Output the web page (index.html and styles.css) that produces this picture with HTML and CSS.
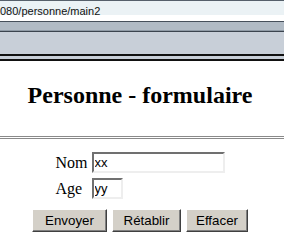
FILE: index.html
```html
<!DOCTYPE html>
<html lang="fr">
<head>
    <meta charset="UTF-8">
    <title>Personne - formulaire</title>
    <link rel="stylesheet" href="styles.css">
</head>
<body>
    <!-- browser chrome -->
    <div class="urlbar">080/personne/main2</div>
    <div class="gap"></div>
    <div class="toolbar"></div>
    <div class="linkbar"></div>
    <div class="tabline"></div>

    <div class="page">
        <h2 class="title">Personne - formulaire</h2>
        <hr class="rule">
        <form class="form">
            <div class="fields">
                <label class="label" for="nom">Nom</label>
                <input class="field field-nom" id="nom" type="text" value="xx">
                <label class="label" for="age">Age</label>
                <input class="field field-age" id="age" type="text" value="yy">
            </div>
            <div class="buttons">
                <button class="btn btn-send" type="button">Envoyer</button>
                <button class="btn btn-reset" type="button">Rétablir</button>
                <button class="btn btn-clear" type="button">Effacer</button>
            </div>
        </form>
    </div>
</body>
</html>
```

FILE: styles.css
```css
body {
    margin: 0;
    background-color: #fff;
    font-family: "Liberation Serif", "Times New Roman", serif;
    color: #000;
}
.urlbar {
    height: 11px;
    padding-top: 3px;
    border-top: 1px solid #56606b;
    background-color: #ebf2f5;
    font-family: "Liberation Sans", Arial, sans-serif;
    font-size: 11px;
    line-height: 14px;
    color: #111;
    white-space: nowrap;
}
.gap {
    height: 6px;
}
.toolbar {
    height: 8px;
    border-top: 1px solid #46505b;
    border-bottom: 1px solid #8f9aa5;
    background-color: #b1bbc5;
}
.linkbar {
    height: 22px;
    border-top: 1px solid #3b444e;
    border-bottom: 2px solid #111;
    background-color: #c8cfd8;
}
.tabline {
    height: 3px;
    border-bottom: 2px solid #111;
    background-color: #c8cfd8;
}
.page {
    padding: 0;
}
.title {
    margin: 20px 0 27px;
    padding-right: 4px;
    font-size: 24px;
    font-weight: bold;
    line-height: 28px;
    text-align: center;
}
.rule {
    margin: 0;
    height: 1px;
    border: 0;
    border-top: 1px solid #8a8a8a;
    border-bottom: 1px solid #8a8a8a;
}
.form {
    margin-top: 13px;
    padding-right: 4px;
}
.fields {
    display: grid;
    grid-template-columns: auto auto;
    justify-content: center;
    justify-items: start;
    align-items: center;
    column-gap: 4px;
    row-gap: 5px;
}
.label {
    font-size: 16px;
}
.field {
    box-sizing: border-box;
    height: 21px;
    margin: 0;
    padding: 1px 1px;
    border-style: solid;
    border-width: 2px;
    border-color: #707070 #eeeeee #eeeeee #707070;
    font-family: "Liberation Sans", Arial, sans-serif;
    font-size: 13px;
    color: #000;
    outline: none;
}
.field-nom {
    width: 133px;
}
.field-age {
    width: 31px;
}
.buttons {
    display: flex;
    justify-content: center;
    gap: 5px;
    margin-top: 10px;
}
.btn {
    box-sizing: border-box;
    height: 23px;
    padding: 0;
    border: 1px solid;
    border-color: #fff #404040 #404040 #fff;
    box-shadow: inset -1px -1px #808080;
    background-color: #d4d0c8;
    font-family: "Liberation Sans", Arial, sans-serif;
    font-size: 13.33px;
    color: #000;
    text-align: center;
}
.btn-send {
    width: 75px;
}
.btn-reset {
    width: 69px;
}
.btn-clear {
    width: 62px;
}
```
